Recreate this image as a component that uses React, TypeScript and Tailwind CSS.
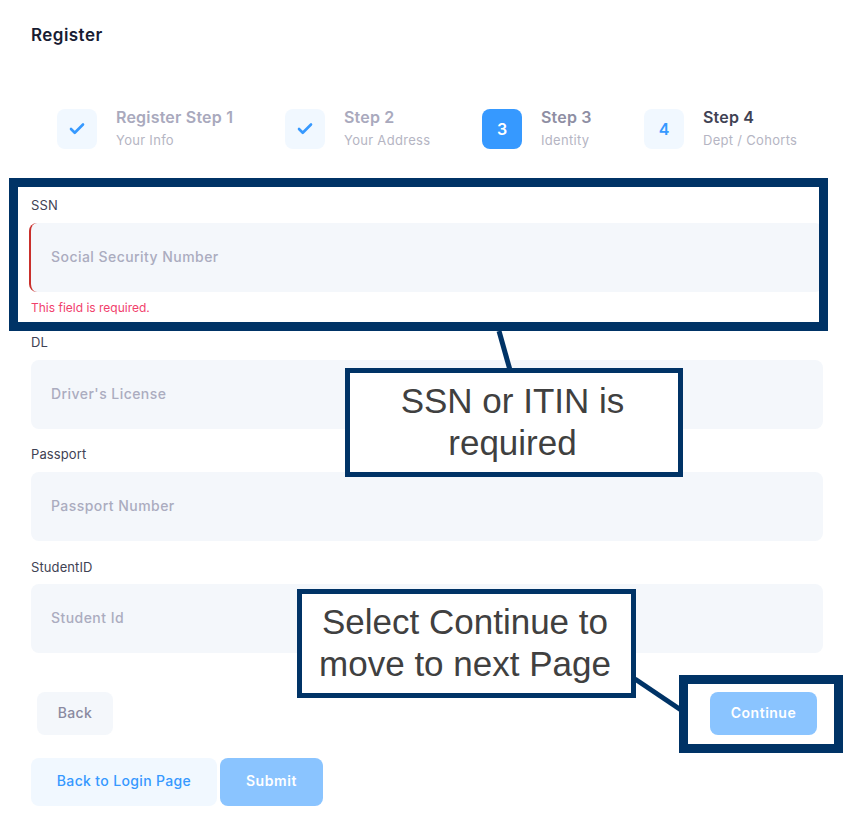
import React from 'react';
import { Check } from 'lucide-react';

const font = "font-['Inter','Liberation_Sans',sans-serif]";

const steps = [
  { key: 'a', icon: 'check', title: 'Register Step 1', sub: 'Your Info', box: 'w-[228px]', tone: 'text-[#a9a9bd]' },
  { key: 'b', icon: 'check', title: 'Step 2', sub: 'Your Address', box: 'w-[197px]', tone: 'text-[#a9a9bd]' },
  { key: 'c', icon: '3', title: 'Step 3', sub: 'Identity', box: 'w-[162px]', tone: 'text-[#8e8ea3]', active: true },
  { key: 'd', icon: '4', title: 'Step 4', sub: 'Dept / Cohorts', box: 'w-[170px]', tone: 'text-[#3f4254]' },
];

const Field = ({ label, placeholder, error, labelGap }: { label: string; placeholder: string; error?: boolean; labelGap: string }) => (
  <div>
    <label className={`block h-[18px] text-[13px] leading-[18px] tracking-[0.1px] text-[#3f4254] ${labelGap}`}>{label}</label>
    <div
      className={`flex h-[69px] items-center rounded-lg bg-[#f4f7fb] pb-[2px] pl-[20px] text-[14px] font-medium tracking-[0.45px] text-[#abacbf] ${
        error ? '-ml-[2px] border-l-2 border-[#c9302c]' : ''
      }`}
    >
      {placeholder}
    </div>
  </div>
);

const Callout = ({ className, lines }: { className: string; lines: string[] }) => (
  <div
    className={`absolute flex flex-col items-center justify-center border-[5px] border-[#003366] bg-white pb-[2px] pr-[3px] font-['Liberation_Sans',sans-serif] text-[35px] leading-[42px] text-[#404040] ${className}`}
  >
    {lines.map((line) => (
      <span key={line}>{line}</span>
    ))}
  </div>
);

export default function App() {
  return (
    <div className={`relative h-[827px] w-[848px] overflow-hidden bg-white ${font}`}>
      <div className="px-[31px] pt-[24px]">
        <h1 className="h-[22px] text-[17px] font-semibold leading-[22px] tracking-[0.45px] text-[#181c32]">Register</h1>

        {/* Stepper */}
        <div className="mt-[63px] flex pl-[26px]">
          {steps.map((s) => (
            <div key={s.key} className={`flex ${s.box}`}>
              <div
                className={`flex h-[40px] w-[40px] shrink-0 items-center justify-center rounded-lg text-[16px] font-semibold ${
                  s.active ? 'bg-[#3699ff] text-white' : 'bg-[#f1f8ff] text-[#3699ff]'
                }`}
              >
                {s.icon === 'check' ? <Check size={18} strokeWidth={3.5} /> : s.icon}
              </div>
              <div className="ml-[19px] -mt-[3px]">
                <div className={`whitespace-nowrap text-[16px] font-semibold leading-[22px] tracking-[0.2px] ${s.tone}`}>{s.title}</div>
                <div className="mt-[2px] whitespace-nowrap text-[13px] leading-[20px] tracking-[0.3px] text-[#b5b5c3]">{s.sub}</div>
              </div>
            </div>
          ))}
        </div>

        {/* Form */}
        <div className="mt-[46px] w-[792px]">
          <Field label="SSN" placeholder="Social Security Number" error labelGap="mb-[9px]" />
          <div className="mt-[7px] h-[18px] text-[12px] leading-[18px] text-[#f1416c]">This field is required.</div>
          <div className="mt-[16px]">
            <Field label="DL" placeholder="Driver's License" labelGap="mb-[9px]" />
          </div>
          <div className="mt-[16px]">
            <Field label="Passport" placeholder="Passport Number" labelGap="mb-[9px]" />
          </div>
          <div className="mt-[17px]">
            <Field label="StudentID" placeholder="Student Id" labelGap="mb-[8px]" />
          </div>
        </div>

        <div className="mt-[39px] flex w-[786px] justify-between pl-[6px]">
          <button className="h-[43px] w-[76px] rounded-lg bg-[#f4f7fb] pb-[2px] text-[14px] font-medium tracking-[0.3px] text-[#8a8aa0]">Back</button>
          <button className="h-[43px] w-[107px] rounded-lg bg-[#8ac4ff] pb-[2px] text-[14px] font-semibold tracking-[0.5px] text-white">Continue</button>
        </div>

        <div className="mt-[23px] flex gap-[3px]">
          <button className="h-[48px] w-[186px] rounded-lg bg-[#f1f8ff] pb-[3px] text-[14px] font-medium tracking-[0.35px] text-[#3699ff]">Back to Login Page</button>
          <button className="h-[48px] w-[103px] rounded-lg bg-[#8ac4ff] pb-[3px] text-[14px] font-semibold tracking-[0.6px] text-white">Submit</button>
        </div>
      </div>

      {/* Annotations laid over the page */}
      <svg className="pointer-events-none absolute left-0 top-0" width="848" height="827" fill="none">
        <path d="M499 331 L510 370" stroke="#003366" strokeWidth="5" />
        <path d="M635 679 L681 710" stroke="#003366" strokeWidth="5" />
      </svg>
      <div className="pointer-events-none absolute left-[9px] top-[178px] h-[153px] w-[819px] border-[9px] border-[#003366]" />
      <div className="pointer-events-none absolute left-[679px] top-[675px] h-[78px] w-[164px] border-[9px] border-[#003366]" />
      <Callout className="left-[345px] top-[368px] h-[109px] w-[338px]" lines={['SSN or ITIN is', 'required']} />
      <Callout className="left-[297px] top-[589px] h-[109px] w-[339px]" lines={['Select Continue to', 'move to next Page']} />
    </div>
  );
}
